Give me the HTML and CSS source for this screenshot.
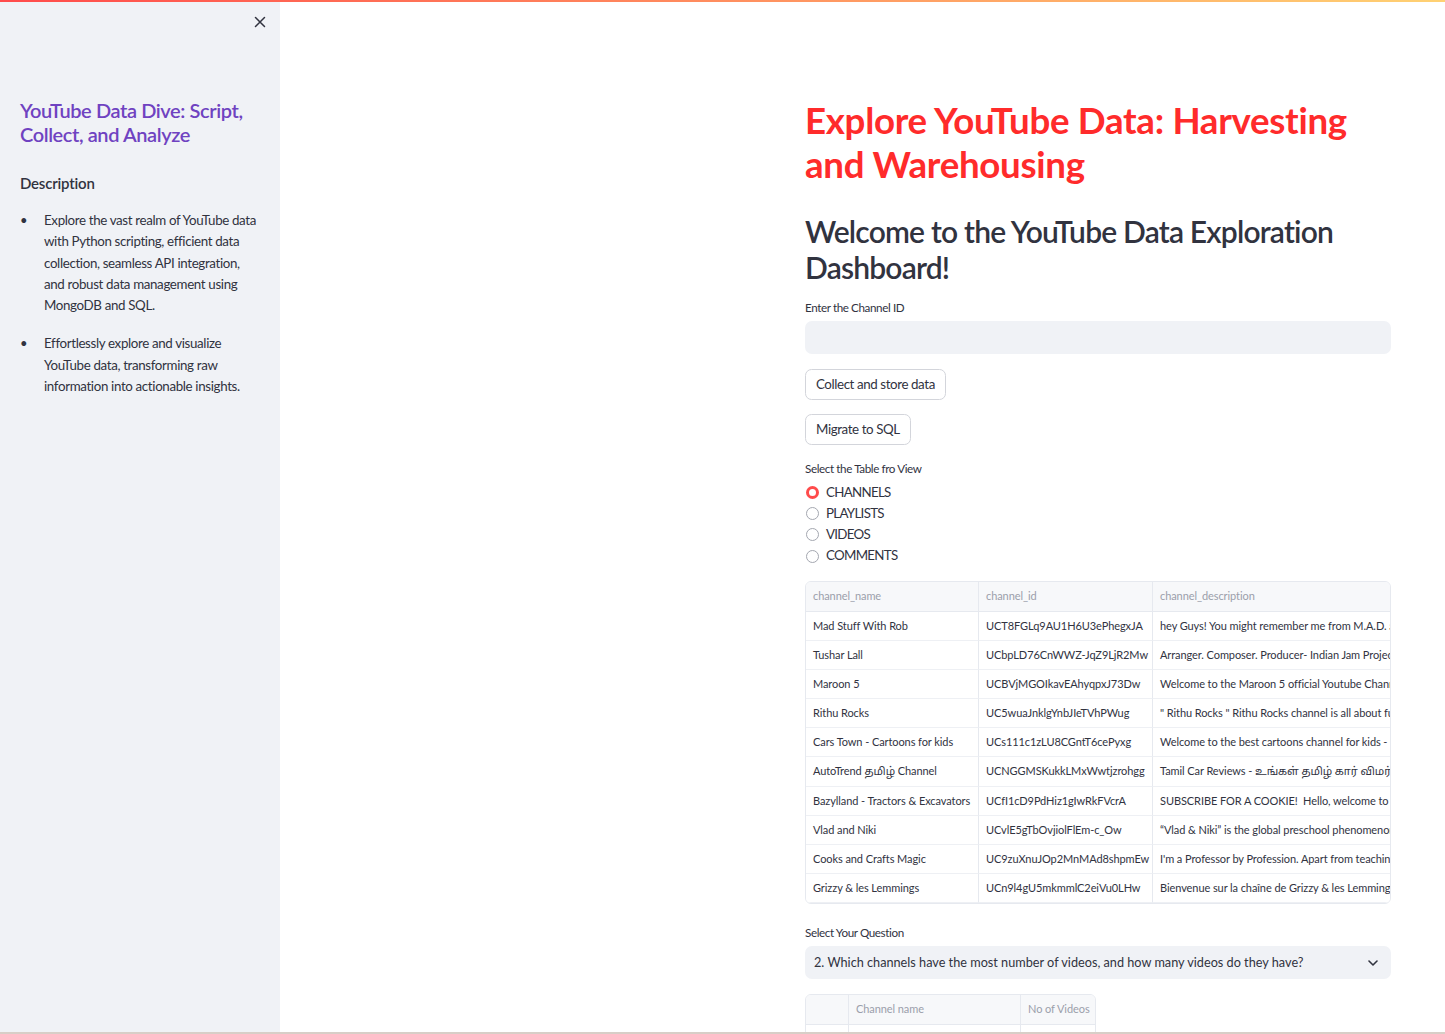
FILE: index.html
```html
<!DOCTYPE html>
<html lang="en">
<head>
<meta charset="utf-8">
<title>YouTube Data Dive</title>
<link rel="stylesheet" href="styles.css">
</head>
<body>
<div class="decoration"></div>
<div class="app">
  <aside class="sidebar">
    <div class="sidebar-header">
      <button class="close-btn" aria-label="Close sidebar">
        <svg width="12" height="12" viewBox="0 0 12 12"><path d="M1.5 1.5 L10.5 10.5 M10.5 1.5 L1.5 10.5" stroke="#31333f" stroke-width="1.5" stroke-linecap="round" fill="none"/></svg>
      </button>
    </div>
    <div class="sidebar-content">
      <h3 class="side-title">YouTube Data Dive: Script, Collect, and Analyze</h3>
      <h5 class="side-sub">Description</h5>
      <ul class="side-list">
        <li><span>Explore the vast realm of YouTube data with Python scripting, efficient data collection, seamless API integration, and robust data management using MongoDB and SQL.</span></li>
        <li><span>Effortlessly explore and visualize YouTube data, transforming raw information into actionable insights.</span></li>
      </ul>
    </div>
  </aside>

  <main class="main">
    <div class="block">
      <h1 class="title">Explore YouTube Data: Harvesting and Warehousing</h1>
      <h2 class="subtitle">Welcome to the YouTube Data Exploration Dashboard!</h2>

      <div class="widget">
        <label class="label">Enter the Channel ID</label>
        <div class="input"></div>
      </div>

      <div class="widget"><button class="btn">Collect and store data</button></div>
      <div class="widget"><button class="btn">Migrate to SQL</button></div>

      <div class="widget">
        <label class="label">Select the Table fro View</label>
        <div class="radios">
          <div class="radio-row"><span class="radio checked"></span><span>CHANNELS</span></div>
          <div class="radio-row"><span class="radio"></span><span>PLAYLISTS</span></div>
          <div class="radio-row"><span class="radio"></span><span>VIDEOS</span></div>
          <div class="radio-row"><span class="radio"></span><span>COMMENTS</span></div>
        </div>
      </div>

      <div class="widget table-wrap">
        <div class="grid grid-main">
          <div class="th">channel_name</div><div class="th">channel_id</div><div class="th last">channel_description</div>
          <div class="td">Mad Stuff With Rob</div><div class="td">UCT8FGLq9AU1H6U3ePhegxJA</div><div class="td last">hey Guys! You might remember me from M.A.D. and now I'm back with more</div>
          <div class="td">Tushar Lall</div><div class="td">UCbpLD76CnWWZ-JqZ9LjR2Mw</div><div class="td last">Arranger. Composer. Producer- Indian Jam Project</div>
          <div class="td">Maroon 5</div><div class="td">UCBVjMGOIkavEAhyqpxJ73Dw</div><div class="td last">Welcome to the Maroon 5 official Youtube Channel</div>
          <div class="td">Rithu Rocks</div><div class="td">UC5wuaJnklgYnbJIeTVhPWug</div><div class="td last">" Rithu Rocks " Rithu Rocks channel is all about fun</div>
          <div class="td">Cars Town - Cartoons for kids</div><div class="td">UCs111c1zLU8CGntT6cePyxg</div><div class="td last">Welcome to the best cartoons channel for kids - Cars Town</div>
          <div class="td">AutoTrend தமிழ் Channel</div><div class="td">UCNGGMSKukkLMxWwtjzrohgg</div><div class="td last">Tamil Car Reviews - உங்கள் தமிழ் கார் விமர்சனம்</div>
          <div class="td">Bazylland - Tractors &amp; Excavators</div><div class="td">UCfI1cD9PdHiz1gIwRkFVcrA</div><div class="td last">SUBSCRIBE FOR A COOKIE!&nbsp; Hello, welcome to my channel</div>
          <div class="td">Vlad and Niki</div><div class="td">UCvlE5gTbOvjiolFlEm-c_Ow</div><div class="td last">“Vlad &amp; Niki” is the global preschool phenomenon</div>
          <div class="td">Cooks and Crafts Magic</div><div class="td">UC9zuXnuJOp2MnMAd8shpmEw</div><div class="td last">I'm a Professor by Profession. Apart from teaching</div>
          <div class="td">Grizzy &amp; les Lemmings</div><div class="td">UCn9l4gU5mkmmlC2eiVu0LHw</div><div class="td last">Bienvenue sur la chaîne de Grizzy &amp; les Lemmings</div>
        </div>
      </div>

      <div class="widget question">
        <label class="label">Select Your Question</label>
        <div class="select">
          <span>2. Which channels have the most number of videos, and how many videos do they have?</span>
          <svg width="10" height="6" viewBox="0 0 10 6"><path d="M1 1 L5 5 L9 1" stroke="#31333f" stroke-width="1.6" fill="none" stroke-linecap="round" stroke-linejoin="round"/></svg>
        </div>
      </div>

      <div class="widget table-wrap small">
        <div class="grid grid-q">
          <div class="th"></div><div class="th">Channel name</div><div class="th last">No of Videos</div>
          <div class="td"></div><div class="td">Tushar Lall</div><div class="td last num">1020</div>
        </div>
      </div>
    </div>
  </main>
</div>
<div class="bottom-edge"></div>
</body>
</html>
```

FILE: styles.css
```css
* { box-sizing: border-box; }

html, body {
  margin: 0;
  padding: 0;
  height: 1034px;
  overflow: hidden;
  background: #ffffff;
}

body {
  font-family: "Source Sans Pro", Lato, "Noto Sans Tamil", "Noto Sans", sans-serif;
  color: #31333f;
  font-size: 13.33px;
  line-height: 21.33px;
  letter-spacing: -0.35px;
}

.decoration {
  position: fixed;
  top: 0;
  left: 0;
  width: 1915px;
  height: 2px;
  background: linear-gradient(90deg, #ff4b4b, #fffd80);
  z-index: 10;
}

.bottom-edge {
  position: fixed;
  left: 0;
  right: 0;
  bottom: 0;
  height: 2px;
  background: #d8cec7;
  z-index: 10;
}

.app {
  display: flex;
  height: 1034px;
}

/* Sidebar */
.sidebar {
  flex: 0 0 280px;
  width: 280px;
  background: #f0f2f6;
  height: 100%;
}

.sidebar-header {
  height: 44px;
  display: flex;
  justify-content: flex-end;
  align-items: center;
  padding-right: 13px;
}

.close-btn {
  border: none;
  background: none;
  padding: 0;
  width: 14px;
  height: 14px;
  display: flex;
  align-items: center;
  justify-content: center;
  cursor: pointer;
}

.sidebar-content {
  padding: 0 20px;
}

.side-title {
  margin: 54px 0 0;
  font-size: 20px;
  line-height: 24px;
  font-weight: 600;
  color: #6f42c1;
  letter-spacing: -0.4px;
}

.side-sub {
  margin: 27px 0 0;
  font-size: 15px;
  line-height: 20px;
  font-weight: 600;
  color: #31333f;
  letter-spacing: -0.2px;
}

.side-list {
  list-style: none;
  margin: 17px 0 0;
  padding: 0;
}

.side-list li {
  display: flex;
  margin-bottom: 16.7px;
}

.side-list li::before {
  content: "•";
  flex: 0 0 24px;
  font-size: 13px;
  padding-left: 0;
}

/* Main */
.main {
  flex: 1;
  height: 100%;
  padding-left: 525px;
}

.block {
  width: 586px;
  padding-top: 98px;
}

.title {
  margin: 0;
  font-size: 36.67px;
  line-height: 44px;
  font-weight: 700;
  color: #ff2b2b;
  letter-spacing: -0.3px;
}

.subtitle {
  margin: 27px 0 0;
  font-size: 30px;
  line-height: 36px;
  font-weight: 600;
  color: #31333f;
  letter-spacing: -0.8px;
}

.widget {
  margin-top: 14px;
}

.label {
  display: block;
  font-size: 11.67px;
  line-height: 16px;
  margin-bottom: 6px;
  color: #31333f;
  letter-spacing: -0.4px;
}

.input {
  height: 33px;
  background: #f0f2f6;
  border-radius: 7px;
}

.widget + .widget { margin-top: 14.5px; }

.btn {
  font-family: inherit;
  font-size: 13.33px;
  line-height: 21px;
  letter-spacing: -0.4px;
  color: #31333f;
  background: #ffffff;
  border: 1px solid #d3d5db;
  border-radius: 6.5px;
  padding: 4px 10px;
  height: 31px;
}

.radios {
  margin-top: 1.5px;
}

.radio-row {
  display: flex;
  align-items: center;
  height: 21.33px;
  font-size: 13.33px;
  letter-spacing: -0.7px;
}

.radio {
  width: 13px;
  height: 13px;
  border-radius: 50%;
  border: 1px solid #a4a7b0;
  margin: 0 7px 0 1px;
  background: #ffffff;
}

.radio.checked {
  border: 3.5px solid #ff4b4b;
  background: #ffffff;
}

.table-wrap {
  border: 1px solid #e6e9ef;
  border-radius: 6px;
  overflow: hidden;
}

.widget + .table-wrap { margin-top: 14.5px; }

.grid {
  display: grid;
  font-size: 11px;
  letter-spacing: -0.08px;
}

.grid-main {
  grid-template-columns: 173px 174px 400px;
}

.th, .td {
  height: 29.2px;
  line-height: 28px;
  padding: 0 7px;
  white-space: nowrap;
  overflow: hidden;
  border-right: 1px solid #e6e9ef;
  border-bottom: 1px solid #eef0f4;
}

.th {
  background: #f7f8fa;
  color: #9b9fab;
  border-bottom: 1px solid #e6e9ef;
}

.td {
  color: #31333f;
  background: #ffffff;
}

.td.last, .th.last { border-right: none; }

.widget.question { margin-top: 20px; }

.select {
  height: 33px;
  background: #f0f2f6;
  border-radius: 7px;
  display: flex;
  align-items: center;
  justify-content: space-between;
  padding: 0 13px 0 9px;
  font-size: 12.7px;
  letter-spacing: 0;
}

.table-wrap.small {
  width: 291px;
  margin-top: 15px;
}

.grid-q {
  grid-template-columns: 43px 172px 74px;
}

.num { text-align: right; }
```
